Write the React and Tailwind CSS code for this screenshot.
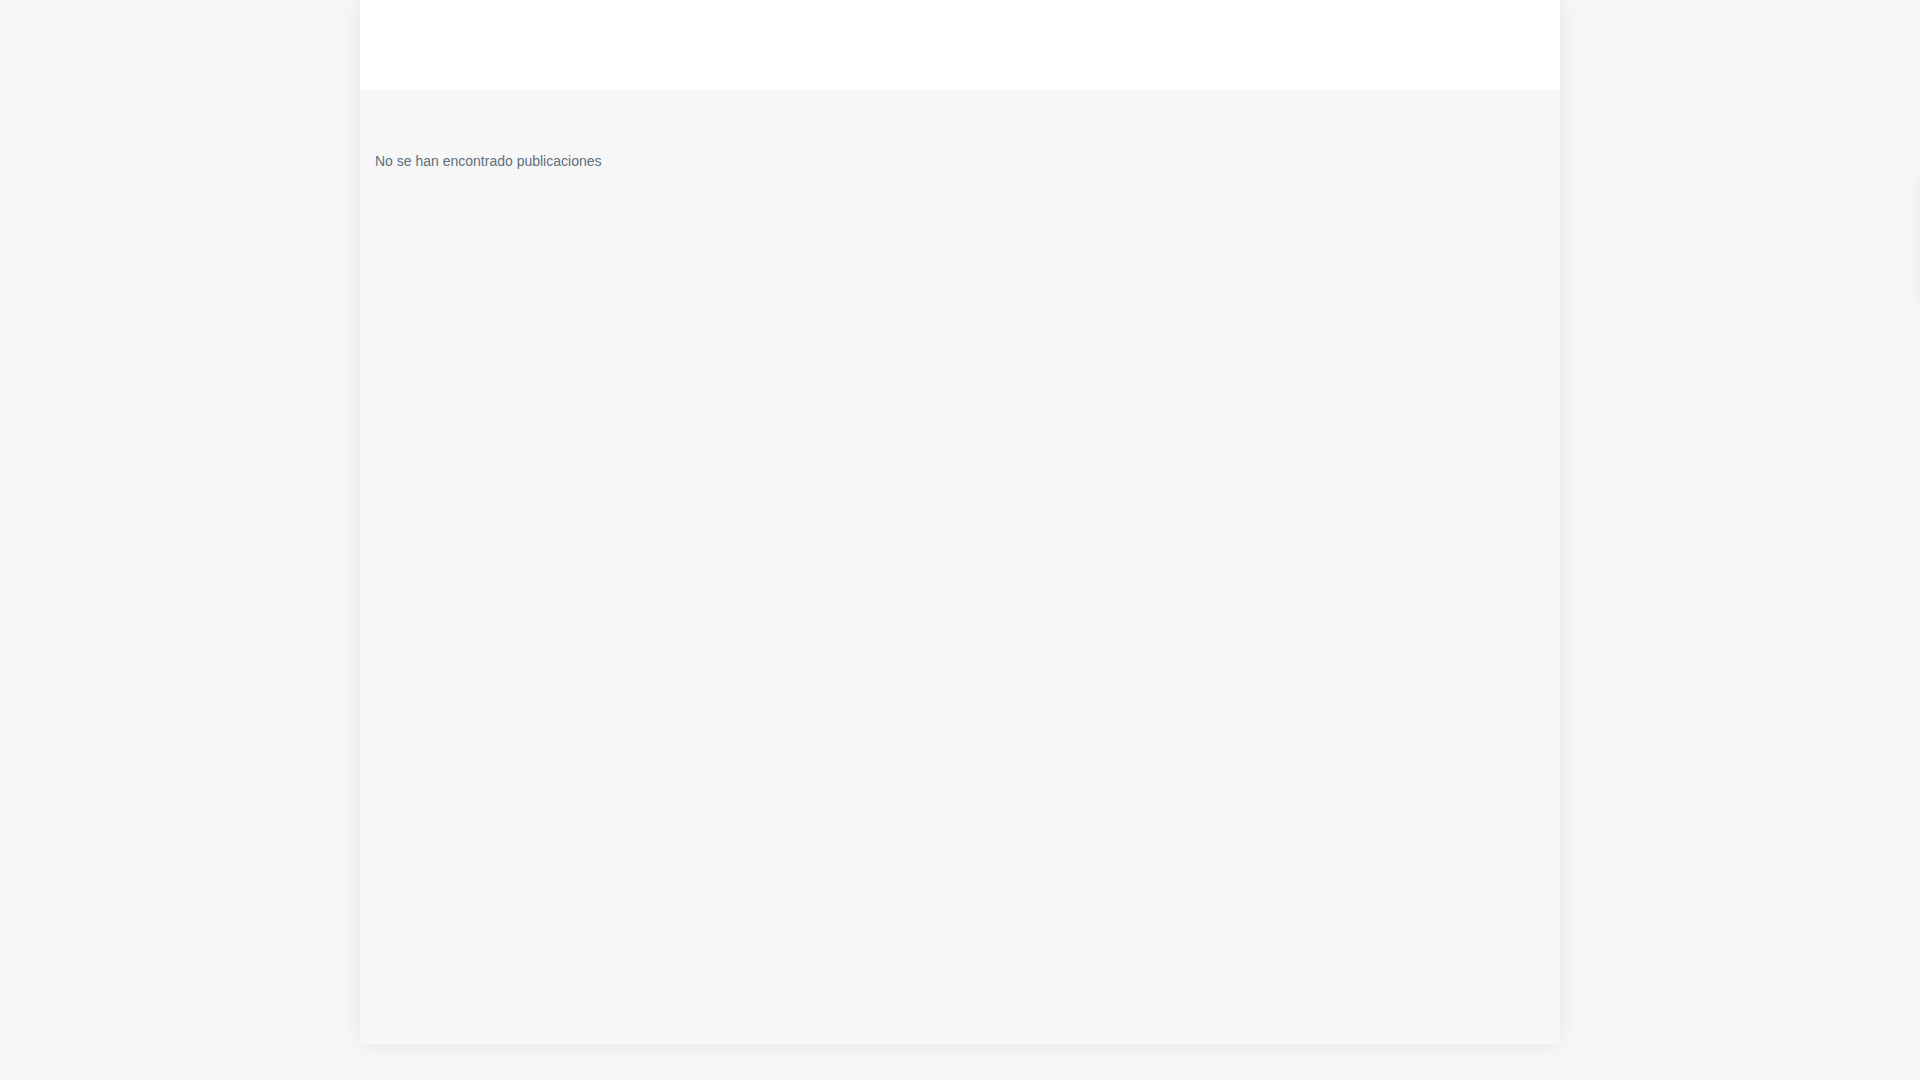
import React from 'react'

export default function App() {
  return (
    <div className="min-h-screen bg-[#f7f7f7] relative overflow-hidden font-['Liberation_Sans',Arial,sans-serif]">
      <div className="w-[1200px] mx-auto h-[1044px] bg-[#f7f7f7] shadow-[0_0_20px_rgba(0,0,0,0.08)] flex flex-col">
        <header className="h-[90px] bg-white shrink-0"></header>
        <main className="px-[15px] pt-[61px]">
          <p className="text-[14px] leading-5 text-[#5e6e7c]">No se han encontrado publicaciones</p>
        </main>
      </div>
      {/* panel lateral fuera de pantalla */}
      <div className="absolute top-[175px] left-[1920px] w-[60px] h-[130px] bg-white shadow-[0_0_12px_rgba(0,0,0,0.08)]"></div>
    </div>
  )
}
